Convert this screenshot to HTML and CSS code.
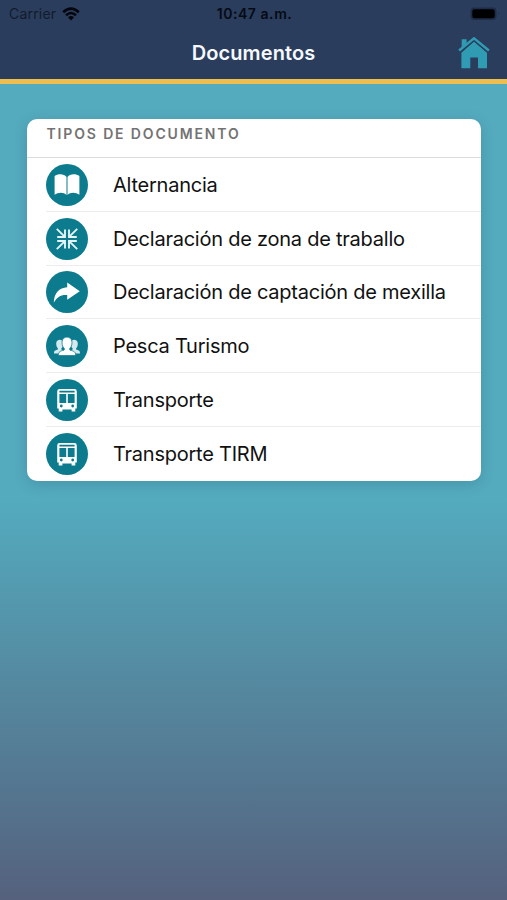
FILE: index.html
```html
<!DOCTYPE html>
<html lang="gl">
<head>
  <meta charset="UTF-8" />
  <title>Documentos</title>
  <link rel="stylesheet" href="styles.css">
</head>
<body>

  <header class="header">
    <div class="status-bar">
      <div class="carrier">
        <span>Carrier</span>
        <svg class="wifi" viewBox="0 0 18 14">
          <path d="M1.2 5.2 Q9 -1.8 16.8 5.2" />
          <path d="M4 8.2 Q9 3.8 14 8.2" />
          <path class="dot" d="M6 10.3 Q9 7.8 12 10.3 L9 13.6 Z" />
        </svg>
      </div>
      <span class="time">10:47 a.m.</span>
      <div class="battery-wrap">
        <svg class="battery" viewBox="0 0 30 14">
          <rect x="0.5" y="0.5" width="26" height="12.5" rx="4" fill="#1e2c48" />
          <rect x="2.3" y="2.3" width="22.4" height="8.9" rx="2.3" fill="#000" />
          <path d="M28 5 Q29.6 6.8 28 8.6 Z" fill="#1e2c48" />
        </svg>
      </div>
    </div>
    <div class="nav-bar">
      <h1>Documentos</h1>
      <a class="home-btn" href="#" aria-label="Inicio">
        <svg viewBox="0 0 32 32">
          <path d="M3.7 2.2 H8.6 V5.9 L3.7 10.4 Z" />
          <path d="M16 4.3 L29 15.8 V31.2 H20 V20.6 H12.3 V31.2 H3.4 V15.8 Z" />
          <path class="gap" d="M2.4 15.5 L16 4.2 L29.6 15.5" />
          <path class="roof" d="M1.1 13.5 L16 1.3 L30.9 13.5" />
        </svg>
      </a>
    </div>
  </header>

  <main class="card">
    <h2>TIPOS DE DOCUMENTO</h2>
    <ul>
      <li>
        <span class="icon">
          <svg viewBox="0 0 42 42">
            <path d="M20.5 13 C18.2 9.5 12 9.4 8.6 12 V30.8 C12 28.2 17.8 28 20.5 31 Z M21.5 13 C23.8 9.5 30 9.4 33.4 12 V30.8 C30 28.2 24.2 28 21.5 31 Z" />
          </svg>
        </span>
        <span class="label">Alternancia</span>
      </li>
      <li>
        <span class="icon">
          <svg viewBox="0 0 42 42">
            <g class="arrows">
              <path d="M10.8 10.8 L18.4 18.4 M19 11.4 V19 H11.2" />
              <path d="M31.2 10.8 L23.6 18.4 M23 11.4 V19 H30.8" />
              <path d="M10.8 31.2 L18.4 23.6 M19 30.6 V23 H11.2" />
              <path d="M31.2 31.2 L23.6 23.6 M23 30.6 V23 H30.8" />
            </g>
          </svg>
        </span>
        <span class="label">Declaración de zona de traballo</span>
      </li>
      <li>
        <span class="icon">
          <svg viewBox="0 0 42 42">
            <path d="M21.2 11.6 L33.8 20.2 L21.2 28.8 V24 C15 23.4 11 26 7.8 31.6 C8 22.2 13.2 16.6 21.2 16.2 Z" />
          </svg>
        </span>
        <span class="label">Declaración de captación de mexilla</span>
      </li>
      <li>
        <span class="icon">
          <svg viewBox="0 0 42 42">
            <g class="side">
              <path d="M10.2 18.6 C10.2 13.6 17.4 13.6 17.4 18.6 C17.4 21 16.6 22.4 15.4 23.2 V24.4 L17 25.4 V28.4 H8 C8 25.6 8.8 25.4 11.9 24.4 V23.2 C10.8 22.4 10.2 21 10.2 18.6 Z" />
              <path d="M31.8 18.6 C31.8 13.6 24.6 13.6 24.6 18.6 C24.6 21 25.4 22.4 26.6 23.2 V24.4 L25 25.4 V28.4 H34 C34 25.6 33.2 25.4 30.1 24.4 V23.2 C31.2 22.4 31.8 21 31.8 18.6 Z" />
            </g>
            <path class="front" d="M16 17.2 C16 10.4 26 10.4 26 17.2 C26 20.4 25.1 22.2 23.8 23.2 V25 C27.8 26.2 29.7 26.6 29.7 30.6 H12.3 C12.3 26.6 14.2 26.2 18.2 25 V23.2 C16.9 22.2 16 20.4 16 17.2 Z" />
          </svg>
        </span>
        <span class="label">Pesca Turismo</span>
      </li>
      <li>
        <span class="icon">
          <svg viewBox="0 0 42 42">
            <path fill-rule="evenodd" d="M13.6 10 H28.4 Q30.8 10 30.8 12.4 V29.4 H29.3 V32.6 H25.6 V30.6 H16.4 V32.6 H12.7 V29.4 H11.2 V12.4 Q11.2 10 13.6 10 Z M13.4 11.8 V13.4 H28.6 V11.8 Z M13.4 15 V24 H20.2 V15 Z M21.8 15 V24 H28.6 V15 Z M13.9 27 a1.4 1.4 0 1 0 2.8 0 a1.4 1.4 0 1 0 -2.8 0 Z M25.3 27 a1.4 1.4 0 1 0 2.8 0 a1.4 1.4 0 1 0 -2.8 0 Z" />
          </svg>
        </span>
        <span class="label">Transporte</span>
      </li>
      <li>
        <span class="icon">
          <svg viewBox="0 0 42 42">
            <path fill-rule="evenodd" d="M13.6 10 H28.4 Q30.8 10 30.8 12.4 V29.4 H29.3 V32.6 H25.6 V30.6 H16.4 V32.6 H12.7 V29.4 H11.2 V12.4 Q11.2 10 13.6 10 Z M13.4 11.8 V13.4 H28.6 V11.8 Z M13.4 15 V24 H20.2 V15 Z M21.8 15 V24 H28.6 V15 Z M13.9 27 a1.4 1.4 0 1 0 2.8 0 a1.4 1.4 0 1 0 -2.8 0 Z M25.3 27 a1.4 1.4 0 1 0 2.8 0 a1.4 1.4 0 1 0 -2.8 0 Z" />
          </svg>
        </span>
        <span class="label">Transporte TIRM</span>
      </li>
    </ul>
  </main>

</body>
</html>
```

FILE: styles.css
```css
* {
  margin: 0;
  padding: 0;
  box-sizing: border-box;
}

html, body {
  height: 100%;
}

body {
  font-family: Inter, 'Liberation Sans', sans-serif;
  background: linear-gradient(to bottom, #54abbe 0, #54abbe 500px, #55617d 900px);
  overflow: hidden;
}

svg {
  display: block;
}

/* Header */
.header {
  height: 84px;
  background: #2a3d5d;
  border-bottom: 5px solid #eebf4f;
}

.status-bar {
  display: grid;
  grid-template-columns: 1fr auto 1fr;
  align-items: center;
  height: 27px;
  padding: 0 7px 0 9px;
  color: #050a14;
}

.carrier {
  display: flex;
  align-items: center;
  gap: 6px;
  font-size: 14px;
  letter-spacing: 0.2px;
  color: #121b2c;
}

.wifi {
  width: 18px;
  height: 14px;
  fill: none;
  stroke: #03060c;
  stroke-width: 2.6;
}

.wifi .dot {
  fill: #03060c;
  stroke: none;
}

.time {
  font-size: 14px;
  font-weight: 600;
  letter-spacing: 0.55px;
}

.battery-wrap {
  display: flex;
  justify-content: flex-end;
}

.battery {
  width: 30px;
  height: 14px;
}

.nav-bar {
  display: grid;
  grid-template-columns: 1fr auto 1fr;
  align-items: center;
  height: 52px;
  padding-right: 17px;
  padding-left: 17px;
}

.nav-bar h1 {
  grid-column: 2;
  font-size: 20px;
  font-weight: 600;
  letter-spacing: 0.1px;
  color: #f6f8fc;
}

.home-btn {
  justify-self: end;
}

.home-btn svg {
  width: 32px;
  height: 32px;
  fill: #2f9cb3;
}

.home-btn .roof {
  fill: none;
  stroke: #2f9cb3;
  stroke-width: 2.4;
}

.home-btn .gap {
  fill: none;
  stroke: #2a3d5d;
  stroke-width: 1;
}

/* Document list */
.card {
  margin: 35px 26px 0 26.5px;
  background: #fff;
  border-radius: 10px;
  box-shadow: 0 3px 14px rgba(0, 40, 60, 0.17);
  overflow: hidden;
}

.card h2 {
  height: 39px;
  padding: 6px 20px 0;
  border-bottom: 1px solid #dcdcdc;
  font-size: 14px;
  line-height: 17px;
  font-weight: 600;
  letter-spacing: 1.85px;
  color: #737373;
}

.card ul {
  list-style: none;
}

.card li {
  display: flex;
  align-items: center;
  gap: 25px;
  height: 53.8px;
  margin-left: 19.5px;
  padding-top: 1px;
  border-bottom: 1px solid #ececec;
}

.card li:last-child {
  border-bottom: none;
}

.icon {
  width: 42px;
  height: 42px;
  border-radius: 50%;
  background: #0c7b8e;
}

.icon svg {
  width: 42px;
  height: 42px;
  fill: #fff;
}

.icon .arrows {
  fill: none;
  stroke: #e4f4f6;
  stroke-width: 1.9;
}

.icon .side {
  fill: #d3ebef;
}

.icon .front {
  stroke: #0c7b8e;
  stroke-width: 0.8;
}

.label {
  font-size: 20px;
  letter-spacing: -0.24px;
  color: #111;
}
```
